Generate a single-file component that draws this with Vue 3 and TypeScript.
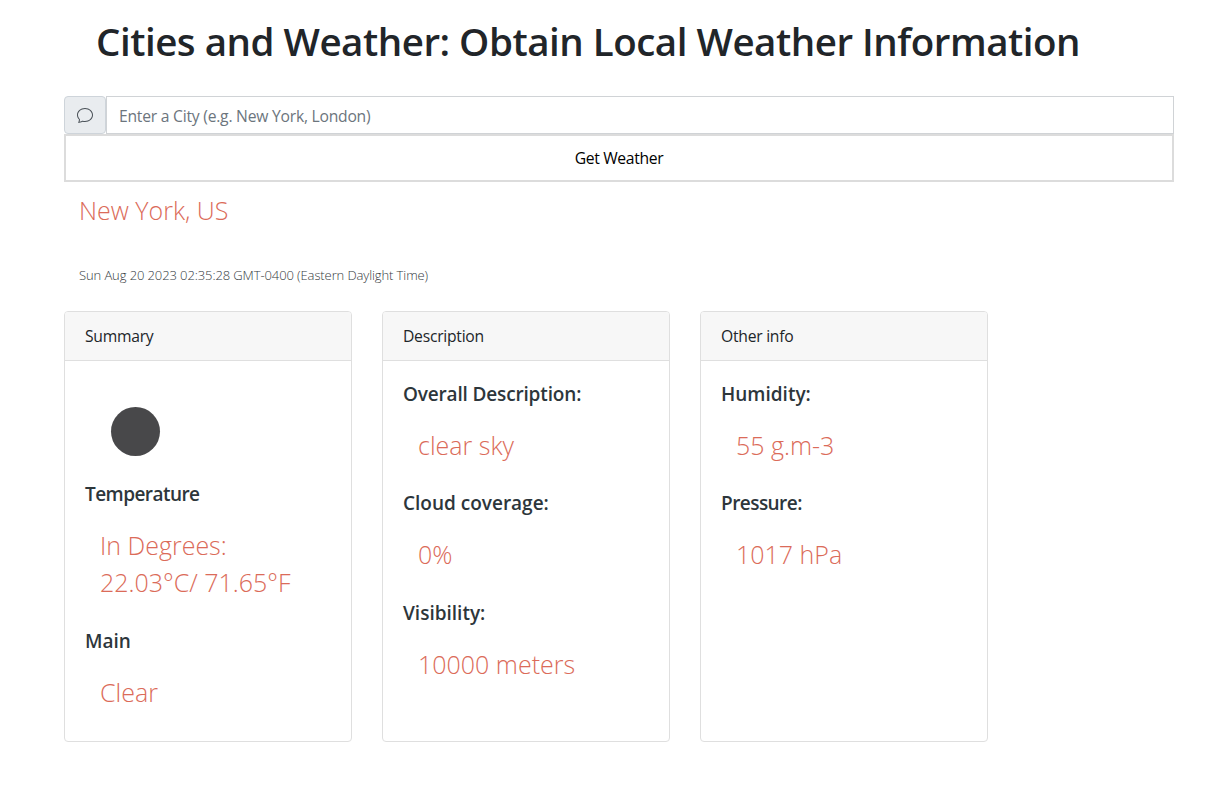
<script setup lang="ts">
import { ref } from 'vue'

interface Entry {
  label: string
  lines: string[]
  fit?: string
}
interface Panel {
  title: string
  icon?: boolean
  entries: Entry[]
}

const city = ref('')
const panels: Panel[] = [
  {
    title: 'Summary',
    icon: true,
    entries: [
      { label: 'Temperature', lines: ['In Degrees:', '22.03°C/ 71.65°F'], fit: 'tight' },
      { label: 'Main', lines: ['Clear'], fit: 'loose' },
    ],
  },
  {
    title: 'Description',
    entries: [
      { label: 'Overall Description:', lines: ['clear sky'] },
      { label: 'Cloud coverage:', lines: ['0%'], fit: 'loose' },
      { label: 'Visibility:', lines: ['10000 meters'], fit: 'loose' },
    ],
  },
  {
    title: 'Other info',
    entries: [
      { label: 'Humidity:', lines: ['55 g.m-3'], fit: 'loose' },
      { label: 'Pressure:', lines: ['1017 hPa'], fit: 'tight' },
    ],
  },
]
</script>

<template>
  <main class="page">
    <h1 class="title">Cities and Weather: Obtain Local Weather Information</h1>
    <form class="search" @submit.prevent>
      <div class="input-group">
        <span class="addon">
          <svg width="16" height="16" viewBox="0 0 16 16" fill="currentColor" aria-hidden="true">
            <path d="M2.678 11.894a1 1 0 0 1 .287.801 10.97 10.97 0 0 1-.398 2c1.395-.323 2.247-.697 2.634-.893a1 1 0 0 1 .71-.074A8.06 8.06 0 0 0 8 14c3.996 0 7-2.807 7-6 0-3.192-3.004-6-7-6S1 4.808 1 8c0 1.468.617 2.83 1.678 3.894zm-.493 3.905a21.682 21.682 0 0 1-.713.129c-.2.032-.352-.176-.273-.362a9.68 9.68 0 0 0 .244-.637l.003-.01c.248-.72.45-1.548.524-2.319C.743 11.37 0 9.76 0 8c0-3.866 3.582-7 8-7s8 3.134 8 7-3.582 7-8 7a9.06 9.06 0 0 1-2.347-.306c-.52.263-1.639.742-3.468 1.105z" />
          </svg>
        </span>
        <input v-model="city" class="field" type="text" placeholder="Enter a City (e.g. New York, London)" />
      </div>
      <button class="submit" type="submit">Get Weather</button>
    </form>
    <p class="value city">New York, US</p>
    <p class="date">Sun Aug 20 2023 02:35:28 GMT-0400 (Eastern Daylight Time)</p>
    <section class="cards">
      <article v-for="panel in panels" :key="panel.title" class="card">
        <header class="card-header">{{ panel.title }}</header>
        <div class="card-body">
          <div v-if="panel.icon" class="weather-icon">
            <svg width="100" height="100" viewBox="0 0 100 100" aria-hidden="true">
              <circle cx="50.5" cy="50.5" r="24.5" fill="#48484a" />
            </svg>
          </div>
          <div v-for="entry in panel.entries" :key="entry.label" class="entry">
            <h5 class="label" :class="entry.fit">{{ entry.label }}</h5>
            <p class="value">
              <span v-for="line in entry.lines" :key="line" class="line">{{ line }}</span>
            </p>
          </div>
        </div>
      </article>
    </section>
  </main>
</template>

<style>
body {
  margin: 0;
  background: #fff;
}
</style>

<style scoped>
* {
  box-sizing: border-box;
}
.page {
  width: 1207px;
  height: 808px;
  padding: 17px 33px 0 64px;
  overflow: hidden;
  color: #212529;
  font: 400 15.7px/24px "Open Sans", "Noto Sans", sans-serif;
  letter-spacing: -0.26px;
}
.title {
  width: 1048px;
  margin: 0 0 31px;
  font-size: 38.5px;
  font-weight: 600;
  line-height: 48px;
  letter-spacing: -0.48px;
  text-align: center;
  white-space: nowrap;
}
.input-group {
  display: flex;
  height: 38px;
}
.addon {
  display: flex;
  align-items: center;
  justify-content: center;
  width: 42px;
  border: 1px solid #ced4da;
  border-radius: 4px;
  background: #e9ecef;
  color: #495057;
}
.field {
  flex: 1;
  min-width: 0;
  padding: 2px 12px 0;
  border: 1px solid #d0d3d6;
  outline: none;
  background: #fff;
  color: #495057;
  font: inherit;
  letter-spacing: -0.24px;
}
.field::placeholder {
  color: #6c757d;
  opacity: 1;
}
.submit {
  display: block;
  width: 100%;
  height: 48px;
  padding: 0;
  border: 2px solid #dcdcdc;
  background: #fff;
  color: #000;
  font: inherit;
  letter-spacing: -0.35px;
}
.value {
  margin: 0;
  padding: 15px;
  color: #db6b59;
  font-size: 25px;
  font-weight: 300;
  line-height: 37px;
  letter-spacing: 0;
}
.city {
  height: 67px;
  padding-top: 10px;
}
.date {
  height: 62px;
  margin: 0;
  padding: 17px 15px 0;
  color: #343a40;
  font-size: 13px;
  font-weight: 300;
  line-height: 19px;
  letter-spacing: -0.1px;
  white-space: nowrap;
}
.line {
  display: block;
  white-space: nowrap;
}
.cards {
  display: flex;
  gap: 30px;
}
.card {
  width: 288px;
  height: 431px;
  border: 1px solid #dfdfdf;
  border-radius: 4px;
  overflow: hidden;
}
.card-header {
  height: 49px;
  padding: 12px 20px;
  border-bottom: 1px solid #dfdfdf;
  background: #f7f7f7;
}
.card-body {
  padding: 20px;
}
.weather-icon {
  height: 101.25px;
}
.weather-icon svg {
  display: block;
}
.card-body > .entry:first-child {
  margin-top: 1px;
}
.entry {
  margin-bottom: 12.4px;
}
.label {
  margin: 0 0 6px;
  color: #2d363b;
  font-size: 19px;
  font-weight: 600;
  line-height: 24px;
  letter-spacing: -0.16px;
}
.label.tight {
  letter-spacing: -0.55px;
}
.label.loose {
  letter-spacing: 0;
}
</style>
